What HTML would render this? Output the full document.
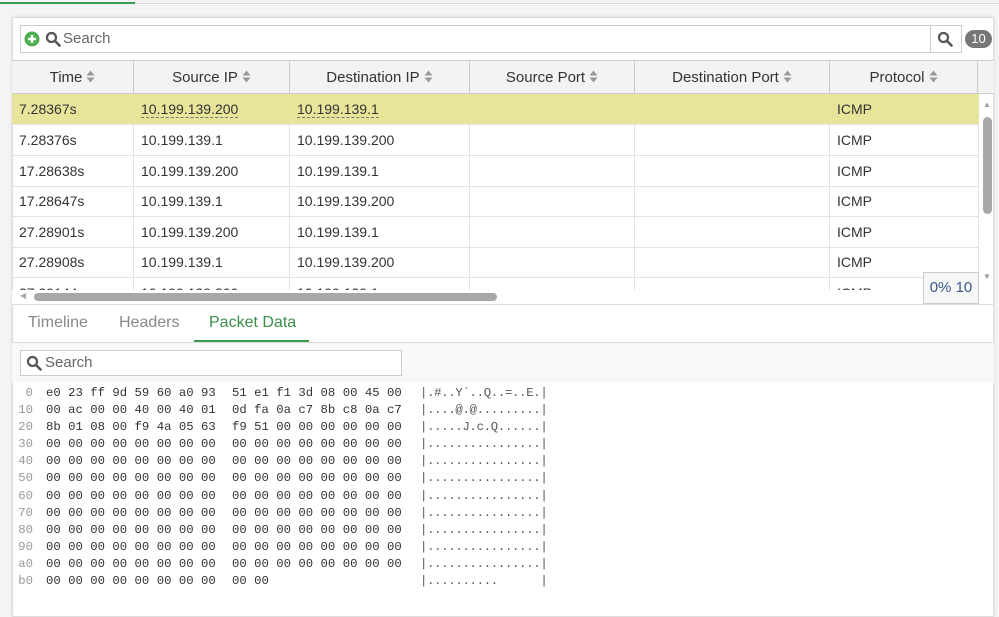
<!DOCTYPE html>
<html><head><meta charset="utf-8"><style>
*{margin:0;padding:0;box-sizing:border-box}
body{width:999px;height:614px;overflow:hidden;background:#f4f4f4;font-family:"Liberation Sans",sans-serif;font-size:14px;color:#333;position:relative}
.a{position:absolute}
.panel{left:12px;top:17px;width:982px;height:600px;background:#fff;border:1px solid #ddd;box-shadow:0 0 3px rgba(0,0,0,.12)}
.hd{top:60px;height:34px;background:#f3f3f3;border-top:1px solid #ccc;border-bottom:1px solid #ccc;left:12px;width:982px}
.hc{position:absolute;top:0;height:33px;line-height:33px;text-align:center;border-right:1px solid #ccc;color:#333;font-size:15px}
.sort{display:inline-block;width:9px;height:13px;margin-left:4px;vertical-align:-1px}
.row{position:absolute;left:12px;width:967px;height:31px;border-bottom:1px solid #e3e3e3}
.c{position:absolute;top:0;height:30px;line-height:30px;padding-left:7px;border-right:1px solid #e3e3e3}
.hex{position:absolute;font-family:"Liberation Mono",monospace;font-size:12.3px;color:#333;white-space:pre;line-height:17.1px}
.off{color:#999;text-align:right;width:21px;left:12px}
.asc{color:#555}
</style></head><body>
<svg width="0" height="0" style="position:absolute"><defs><symbol id="s" viewBox="0 0 9 13"><path d="M4.5 0.5L8.5 5.5H0.5Z M4.5 12.5L8.5 7.5H0.5Z" fill="#9a9a9a"/></symbol></defs></svg>
<div class="a" style="left:0;top:3px;width:999px;height:1px;background:#d8d8d8"></div>
<div class="a" style="left:0;top:2px;width:135px;height:2px;background:#3a9a4e"></div>
<div class="a panel"></div>
<div class="a" style="left:20px;top:25px;width:942px;height:28px;border:1px solid #ccc;background:#fff"></div>
<div class="a" style="left:930px;top:25px;width:32px;height:28px;border:1px solid #ccc;background:#fff"></div>
<svg class="a" style="left:24px;top:31px" width="16" height="16" viewBox="0 0 16 16"><circle cx="8" cy="8" r="7.5" fill="#4caf50"/><path d="M8 4v8M4 8h8" stroke="#fff" stroke-width="2.4"/></svg>
<svg class="a" style="left:45px;top:31px" width="16" height="16" viewBox="0 0 16 16"><circle cx="6.5" cy="6.5" r="4.5" fill="none" stroke="#555" stroke-width="2.2"/><path d="M10 10l4.5 4.5" stroke="#555" stroke-width="2.6" stroke-linecap="round"/></svg>
<div class="a" style="left:63px;top:30px;font-size:15px;color:#666">Search</div>
<svg class="a" style="left:937px;top:31px" width="16" height="16" viewBox="0 0 16 16"><circle cx="6.5" cy="6.5" r="4.5" fill="none" stroke="#555" stroke-width="2.2"/><path d="M10 10l4.5 4.5" stroke="#555" stroke-width="2.6" stroke-linecap="round"/></svg>
<div class="a" style="left:965px;top:30px;width:27px;height:18px;border-radius:9px;background:#777;color:#fff;font-size:13px;text-align:center;line-height:18px">10</div>
<div class="a hd">
<div class="hc" style="left:0;width:122px">Time<svg class="sort"><use href="#s"/></svg></div>
<div class="hc" style="left:122px;width:156px">Source IP<svg class="sort"><use href="#s"/></svg></div>
<div class="hc" style="left:278px;width:180px">Destination IP<svg class="sort"><use href="#s"/></svg></div>
<div class="hc" style="left:458px;width:165px">Source Port<svg class="sort"><use href="#s"/></svg></div>
<div class="hc" style="left:623px;width:195px">Destination Port<svg class="sort"><use href="#s"/></svg></div>
<div class="hc" style="left:818px;width:148px">Protocol<svg class="sort"><use href="#s"/></svg></div>
</div>
<div class="a" style="left:12px;top:94px;width:967px;height:196px;overflow:hidden">
<div class="row" style="left:0;top:0;background:#e6e599">
<div class="c" style="left:0;width:122px;border-color:#e6e599">7.28367s</div>
<div class="c" style="left:122px;width:156px;border-color:#e6e599"><span style="border-bottom:1px dashed #777">10.199.139.200</span></div>
<div class="c" style="left:278px;width:180px;border-color:#e6e599"><span style="border-bottom:1px dashed #777">10.199.139.1</span></div>
<div class="c" style="left:458px;width:165px;border-color:#e6e599"></div>
<div class="c" style="left:623px;width:195px;border-color:#e6e599"></div>
<div class="c" style="left:818px;width:149px;border-color:#e6e599">ICMP</div>
</div>
<div class="row" style="left:0;top:31px"><div class="c" style="left:0;width:122px">7.28376s</div><div class="c" style="left:122px;width:156px">10.199.139.1</div><div class="c" style="left:278px;width:180px">10.199.139.200</div><div class="c" style="left:458px;width:165px"></div><div class="c" style="left:623px;width:195px"></div><div class="c" style="left:818px;width:149px">ICMP</div></div>
<div class="row" style="left:0;top:61.5px"><div class="c" style="left:0;width:122px">17.28638s</div><div class="c" style="left:122px;width:156px">10.199.139.200</div><div class="c" style="left:278px;width:180px">10.199.139.1</div><div class="c" style="left:458px;width:165px"></div><div class="c" style="left:623px;width:195px"></div><div class="c" style="left:818px;width:149px">ICMP</div></div>
<div class="row" style="left:0;top:92px"><div class="c" style="left:0;width:122px">17.28647s</div><div class="c" style="left:122px;width:156px">10.199.139.1</div><div class="c" style="left:278px;width:180px">10.199.139.200</div><div class="c" style="left:458px;width:165px"></div><div class="c" style="left:623px;width:195px"></div><div class="c" style="left:818px;width:149px">ICMP</div></div>
<div class="row" style="left:0;top:122.5px"><div class="c" style="left:0;width:122px">27.28901s</div><div class="c" style="left:122px;width:156px">10.199.139.200</div><div class="c" style="left:278px;width:180px">10.199.139.1</div><div class="c" style="left:458px;width:165px"></div><div class="c" style="left:623px;width:195px"></div><div class="c" style="left:818px;width:149px">ICMP</div></div>
<div class="row" style="left:0;top:153px"><div class="c" style="left:0;width:122px">27.28908s</div><div class="c" style="left:122px;width:156px">10.199.139.1</div><div class="c" style="left:278px;width:180px">10.199.139.200</div><div class="c" style="left:458px;width:165px"></div><div class="c" style="left:623px;width:195px"></div><div class="c" style="left:818px;width:149px">ICMP</div></div>
<div class="row" style="left:0;top:184px"><div class="c" style="left:0;width:122px">27.29144s</div><div class="c" style="left:122px;width:156px">10.199.139.200</div><div class="c" style="left:278px;width:180px">10.199.139.1</div><div class="c" style="left:458px;width:165px"></div><div class="c" style="left:623px;width:195px"></div><div class="c" style="left:818px;width:149px">ICMP</div></div>
</div>
<div class="a" style="left:979px;top:94px;width:14px;height:196px;background:#fff"></div>
<div class="a" style="left:983px;top:100px;font-size:8px;color:#999">▲</div>
<div class="a" style="left:983px;top:117px;width:9px;height:97px;border-radius:5px;background:#a8a8a8"></div>
<div class="a" style="left:983px;top:272px;font-size:8px;color:#999">▼</div>
<div class="a" style="left:12px;top:290px;width:967px;height:14px;background:#fff"></div>
<div class="a" style="left:20px;top:291px;font-size:8px;color:#aaa">◀</div>
<div class="a" style="left:34px;top:293px;width:463px;height:8px;border-radius:4px;background:#a8a8a8"></div>
<div class="a" style="left:923px;top:272px;width:56px;height:32px;border:1px solid #ccc;background:#f7f7f7;color:#3a5a8a;font-size:15px;text-align:center;line-height:30px">0% 10</div>
<div class="a" style="left:12px;top:304px;width:982px;height:1px;background:#ddd"></div>
<div class="a" style="left:28px;top:314px;font-size:16px;color:#888">Timeline</div>
<div class="a" style="left:119px;top:314px;font-size:16px;color:#888">Headers</div>
<div class="a" style="left:209px;top:314px;font-size:16px;color:#3a8f4a">Packet Data</div>
<div class="a" style="left:12px;top:342px;width:982px;height:41px;background:#f9f9f9;border-top:1px solid #ddd"></div>
<div class="a" style="left:194px;top:340px;width:115px;height:2px;background:#3a9a4e"></div>
<div class="a" style="left:20px;top:350px;width:382px;height:26px;border:1px solid #ccc;background:#fff"></div>
<svg class="a" style="left:26px;top:355px" width="16" height="16" viewBox="0 0 16 16"><circle cx="6.5" cy="6.5" r="4.5" fill="none" stroke="#555" stroke-width="2.2"/><path d="M10 10l4.5 4.5" stroke="#555" stroke-width="2.6" stroke-linecap="round"/></svg>
<div class="a" style="left:45px;top:354px;font-size:15px;color:#666">Search</div>
<div class="a" style="left:0;top:385px;width:999px">
<div class="hex off" style="top:0">0<br>10<br>20<br>30<br>40<br>50<br>60<br>70<br>80<br>90<br>a0<br>b0</div>
<div class="hex" style="left:46px;top:0">e0 23 ff 9d 59 60 a0 93
00 ac 00 00 40 00 40 01
8b 01 08 00 f9 4a 05 63
00 00 00 00 00 00 00 00
00 00 00 00 00 00 00 00
00 00 00 00 00 00 00 00
00 00 00 00 00 00 00 00
00 00 00 00 00 00 00 00
00 00 00 00 00 00 00 00
00 00 00 00 00 00 00 00
00 00 00 00 00 00 00 00
00 00 00 00 00 00 00 00</div>
<div class="hex" style="left:232px;top:0">51 e1 f1 3d 08 00 45 00
0d fa 0a c7 8b c8 0a c7
f9 51 00 00 00 00 00 00
00 00 00 00 00 00 00 00
00 00 00 00 00 00 00 00
00 00 00 00 00 00 00 00
00 00 00 00 00 00 00 00
00 00 00 00 00 00 00 00
00 00 00 00 00 00 00 00
00 00 00 00 00 00 00 00
00 00 00 00 00 00 00 00
00 00</div>
<div class="hex asc" style="left:420px;top:0;letter-spacing:-0.3px">|.#..Y`..Q..=..E.|
|....@.@.........|
|.....J.c.Q......|
|................|
|................|
|................|
|................|
|................|
|................|
|................|
|................|
|..........      |</div>
</div>
</body></html>
